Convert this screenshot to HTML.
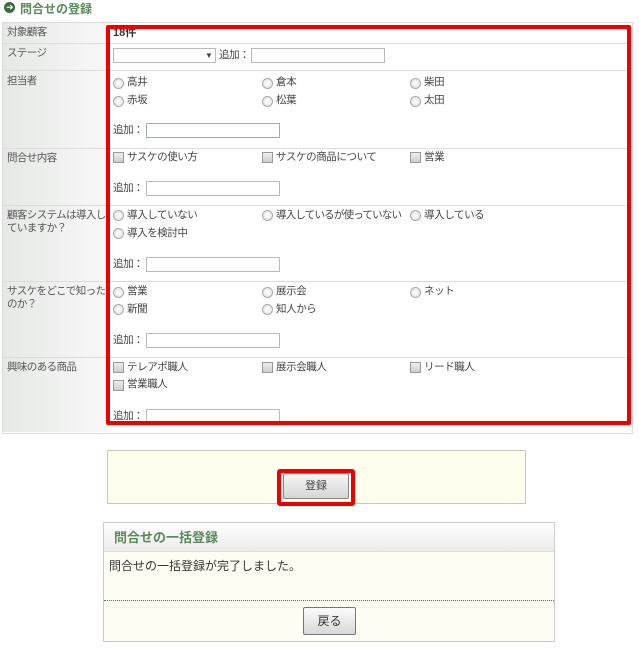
<!DOCTYPE html>
<html><head><meta charset="utf-8"><style>
body{margin:0;width:639px;height:651px;background:#fff;font-family:"Liberation Sans","Noto Sans CJK JP",sans-serif;font-size:11px;color:#444;position:relative;overflow:hidden}
.a{position:absolute;white-space:nowrap;line-height:12px}
.t{letter-spacing:-0.4px;font-size:10.5px}
.lab{position:absolute;left:3px;width:106px;background:linear-gradient(90deg,#e6e8e6,#f7f8f7);color:#555;font-size:10.5px;letter-spacing:-0.6px;padding:0 0 0 4px;box-sizing:border-box;line-height:13px;white-space:nowrap}
.hl{position:absolute;left:2px;width:630px;height:1px;background:#dcdcdc}
.rd{position:absolute;width:9px;height:9px;border:1px solid #aaa;border-radius:50%;background:radial-gradient(#fff,#ddd)}
.cb{position:absolute;width:9px;height:9px;border:1px solid #999;background:linear-gradient(#eee,#ccc)}
.in{position:absolute;height:13px;border:1px solid #bbb;background:#fff}
</style></head><body>
<div class="a" style="left:4px;top:2px;width:11px;height:11px;border-radius:50%;background:#3c6b3c"></div>
<div class="a" style="left:6px;top:3px;color:#fff;font-size:9px;line-height:9px">➜</div>
<div class="a" style="left:20px;top:2px;font-size:12px;font-weight:bold;color:#5a8a5a;line-height:14px">問合せの登録</div>

<div class="a" style="left:2px;top:22px;width:629px;height:410px;border:1px solid #dcdcdc"></div>
<div class="lab" style="top:23px;height:20px;padding-top:3px">対象顧客</div>
<div class="lab" style="top:44px;height:26px;padding-top:3px">ステージ</div>
<div class="lab" style="top:71px;height:77px;padding-top:4px">担当者</div>
<div class="lab" style="top:149px;height:56px;padding-top:3px">問合せ内容</div>
<div class="lab" style="top:206px;height:75px;padding-top:3px">顧客システムは導入し<br>ていますか？</div>
<div class="lab" style="top:282px;height:75px;padding-top:3px">サスケをどこで知った<br>のか？</div>
<div class="lab" style="top:358px;height:74px;padding-top:3px">興味のある商品</div>
<div class="hl" style="top:43px"></div><div class="hl" style="top:70px"></div><div class="hl" style="top:148px"></div><div class="hl" style="top:205px"></div><div class="hl" style="top:281px"></div><div class="hl" style="top:357px"></div>

<div class="a" style="left:113px;top:27px;font-weight:bold;color:#333">18件</div>
<div class="in" style="left:113px;top:48px;width:101px"></div><div class="a" style="left:205px;top:50px;font-size:8px">▼</div>
<div class="a t" style="left:219px;top:49px">追加：</div><div class="in" style="left:251px;top:48px;width:132px"></div>

<div class="rd" style="left:113px;top:78px"></div><div class="a t" style="left:127px;top:76px">高井</div>
<div class="rd" style="left:262px;top:78px"></div><div class="a t" style="left:276px;top:76px">倉本</div>
<div class="rd" style="left:410px;top:78px"></div><div class="a t" style="left:424px;top:76px">柴田</div>
<div class="rd" style="left:113px;top:96px"></div><div class="a t" style="left:127px;top:94px">赤坂</div>
<div class="rd" style="left:262px;top:96px"></div><div class="a t" style="left:276px;top:94px">松葉</div>
<div class="rd" style="left:410px;top:96px"></div><div class="a t" style="left:424px;top:94px">太田</div>
<div class="a t" style="left:113px;top:124px">追加：</div><div class="in" style="left:146px;top:123px;width:132px;border-color:#9ab"></div>

<div class="cb" style="left:113px;top:152px"></div><div class="a t" style="left:127px;top:151px">サスケの使い方</div>
<div class="cb" style="left:262px;top:152px"></div><div class="a t" style="left:276px;top:151px">サスケの商品について</div>
<div class="cb" style="left:410px;top:152px"></div><div class="a t" style="left:424px;top:151px">営業</div>
<div class="a t" style="left:113px;top:182px">追加：</div><div class="in" style="left:146px;top:181px;width:132px"></div>

<div class="rd" style="left:113px;top:210px"></div><div class="a t" style="left:127px;top:209px">導入していない</div>
<div class="rd" style="left:262px;top:210px"></div><div class="a t" style="left:276px;top:209px;letter-spacing:-0.8px">導入しているが使っていない</div>
<div class="rd" style="left:410px;top:210px"></div><div class="a t" style="left:424px;top:209px">導入している</div>
<div class="rd" style="left:113px;top:228px"></div><div class="a t" style="left:127px;top:227px">導入を検討中</div>
<div class="a t" style="left:113px;top:258px">追加：</div><div class="in" style="left:146px;top:257px;width:132px"></div>

<div class="rd" style="left:113px;top:287px"></div><div class="a t" style="left:127px;top:285px">営業</div>
<div class="rd" style="left:262px;top:287px"></div><div class="a t" style="left:276px;top:285px">展示会</div>
<div class="rd" style="left:410px;top:287px"></div><div class="a t" style="left:424px;top:285px">ネット</div>
<div class="rd" style="left:113px;top:304px"></div><div class="a t" style="left:127px;top:303px">新聞</div>
<div class="rd" style="left:262px;top:304px"></div><div class="a t" style="left:276px;top:303px">知人から</div>
<div class="a t" style="left:113px;top:334px">追加：</div><div class="in" style="left:146px;top:333px;width:132px"></div>

<div class="cb" style="left:113px;top:362px"></div><div class="a t" style="left:127px;top:361px">テレアポ職人</div>
<div class="cb" style="left:262px;top:362px"></div><div class="a t" style="left:276px;top:361px">展示会職人</div>
<div class="cb" style="left:410px;top:362px"></div><div class="a t" style="left:424px;top:361px">リード職人</div>
<div class="cb" style="left:113px;top:380px"></div><div class="a t" style="left:127px;top:378px">営業職人</div>
<div class="a t" style="left:113px;top:410px">追加：</div><div class="in" style="left:146px;top:409px;width:132px"></div>

<div class="a" style="left:106px;top:25px;width:517px;height:392px;border:4px solid #e00;border-radius:2px"></div>

<div class="a" style="left:107px;top:450px;width:417px;height:52px;border:1px solid #ccc8b0;background:#fefdee"></div>
<div class="a" style="left:277px;top:469px;width:78px;height:37px;border:4px solid #e00;border-radius:3px;box-sizing:border-box"></div>
<div class="a" style="left:283px;top:473px;width:66px;height:26px;border:1px solid #888;border-radius:2px;background:linear-gradient(#f6f6f6,#d6d6d6);box-sizing:border-box;text-align:center;line-height:24px;color:#444">登録</div>

<div class="a" style="left:103px;top:522px;width:450px;height:118px;border:1px solid #ccc;background:#fefdf4"></div>
<div class="a" style="left:104px;top:523px;width:450px;height:28px;background:linear-gradient(#fff,#ebebeb);border-bottom:1px solid #ddd"></div>
<div class="a" style="left:114px;top:530px;font-size:13px;line-height:15px;font-weight:bold;color:#5a8a5a">問合せの一括登録</div>
<div class="a" style="left:109px;top:559px;font-size:12px;line-height:14px;color:#333">問合せの一括登録が完了しました。</div>
<div class="a" style="left:104px;top:600px;width:450px;border-top:1px dotted #666"></div>
<div class="a" style="left:303px;top:607px;width:53px;height:28px;border:1px solid #777;border-radius:2px;background:linear-gradient(#fbfbfb,#d8d8d8);box-sizing:border-box;text-align:center;line-height:26px;font-size:12px;color:#333">戻る</div>
</body></html>
